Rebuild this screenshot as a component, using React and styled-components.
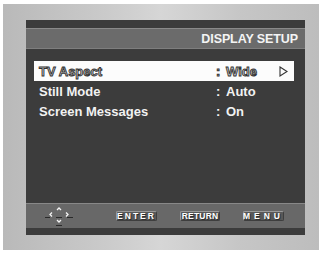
import React from "react";
import styled, { createGlobalStyle } from "styled-components";

const Global = createGlobalStyle`
  html, body { margin: 0; padding: 0; background: #fff; }
  body { font-family: "Liberation Sans", Arial, sans-serif; }
`;

const Page = styled.div`
  width: 323px;
  height: 253px;
  padding: 4px 4px 3px 3px;
  box-sizing: border-box;
`;

const Frame = styled.div`
  height: 246px;
  box-sizing: border-box;
  padding: 16px 14px 15px 23px;
  background: linear-gradient(90deg, #b9b9b9 0%, #c9c9c9 30%, #d6d6d6 50%, #c6c6c6 75%, #bdbdbd 100%);
`;

const Screen = styled.div`
  height: 215px;
  background: #3c3c3c;
  display: flex;
  flex-direction: column;
  padding-top: 8px;
  box-sizing: border-box;
`;

const Header = styled.div`
  height: 21px;
  box-sizing: border-box;
  background: #6b6b6b;
  border-top: 1px solid #8a8a8a;
  border-bottom: 1px solid #7e7e7e;
  display: flex;
  align-items: center;
  justify-content: flex-end;
  padding-right: 7px;
  color: #f4f4f4;
  font-weight: bold;
  font-size: 12.5px;
  letter-spacing: -0.1px;
`;

const List = styled.div`
  margin-top: 12px;
  padding: 0 11px 0 8px;
  display: flex;
  flex-direction: column;
`;

const Row = styled.div`
  height: 20px;
  display: flex;
  align-items: center;
  background: ${(p) => (p.$active ? "#fcfcfc" : "transparent")};
  color: ${(p) => (p.$active ? "#d0d0d0" : "#f2f2f2")};
  font-weight: bold;
  font-size: 13px;
  padding-left: 5px;
  ${(p) => (p.$active ? "-webkit-text-stroke: 0.9px #333;" : "")}
`;

const Label = styled.span`
  width: 177px;
`;

const Colon = styled.span`
  width: 10px;
`;

const Value = styled.span`
  flex: 1;
`;

const Arrow = styled.svg`
  margin-right: 6px;
`;

const Spacer = styled.div`
  flex: 1;
`;

const Footer = styled.div`
  height: 25px;
  box-sizing: border-box;
  background: #686868;
  border-top: 1px solid #888;
  margin-bottom: 7px;
  display: flex;
  align-items: center;
  padding-left: 19px;
`;

const Nav = styled.svg`
  margin-right: 43px;
`;

const Key = styled.div`
  height: 10px;
  width: ${(p) => p.$w}px;
  margin-right: ${(p) => p.$mr}px;
  box-sizing: border-box;
  background: #585858;
  border: 1px solid #9a9a9a;
  border-right-color: #3e3e3e;
  border-bottom-color: #3e3e3e;
  border-radius: 2px;
  display: flex;
  align-items: center;
  justify-content: center;
  color: #fff;
  font-weight: bold;
  font-size: 8.5px;
  letter-spacing: ${(p) => p.$ls}px;
  text-shadow: 1px 1px 0 #2e2e2e;
  line-height: 1;
`;

const rows = [
  { label: "TV Aspect", value: "Wide", active: true },
  { label: "Still Mode", value: "Auto" },
  { label: "Screen Messages", value: "On" },
];

export default function App() {
  return (
    <Page>
      <Global />
      <Frame>
        <Screen>
          <Header>DISPLAY SETUP</Header>
          <List>
            {rows.map((r) => (
              <Row key={r.label} $active={r.active}>
                <Label>{r.label}</Label>
                <Colon>:</Colon>
                <Value>{r.value}</Value>
                {r.active && (
                  <Arrow width="9" height="11" viewBox="0 0 9 11">
                    <path d="M1 1 L8 5.5 L1 10 Z" fill="none" stroke="#333" strokeWidth="1.1" />
                  </Arrow>
                )}
              </Row>
            ))}
          </List>
          <Spacer />
          <Footer>
            <Nav width="28" height="20" viewBox="0 0 28 20">
              <g stroke="#2a2a2a" strokeWidth="1">
                <line x1="0" y1="11.5" x2="5" y2="11.5" />
                <line x1="22" y1="11.5" x2="28" y2="11.5" />
                <line x1="11" y1="11.5" x2="17" y2="11.5" />
                <line x1="11" y1="19.5" x2="17" y2="19.5" />
              </g>
              <g fill="none" stroke="#f4f4f4" strokeWidth="1.3">
                <path d="M7 6.5 L5 8.5 L7 10.5" />
                <path d="M21 6.5 L23 8.5 L21 10.5" />
                <path d="M12 4 L14 2 L16 4" />
                <path d="M12 14 L14 16 L16 14" />
              </g>
            </Nav>
            <Key $w={41} $mr={23} $ls={2}>ENTER</Key>
            <Key $w={40} $mr={23} $ls={0.2}>RETURN</Key>
            <Key $w={41} $mr={0} $ls={4}>MENU</Key>
          </Footer>
        </Screen>
      </Frame>
    </Page>
  );
}
